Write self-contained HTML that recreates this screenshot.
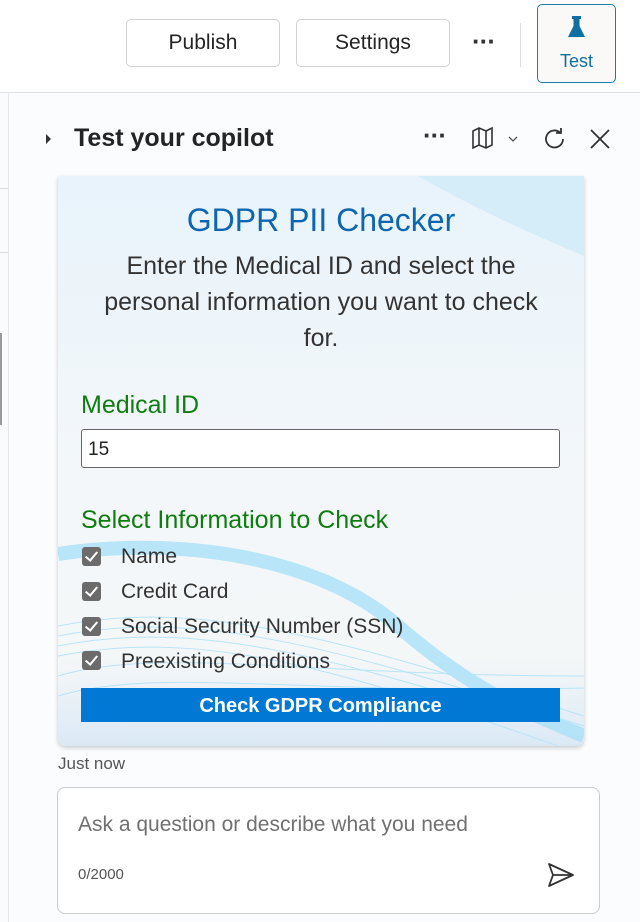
<!DOCTYPE html>
<html><head><style>
body{margin:0;width:640px;height:922px;overflow:hidden;background:#fff;font-family:"Liberation Sans",sans-serif;position:relative}
.a{position:absolute}
.btn{position:absolute;top:19px;height:48px;border:1px solid #d1d1d1;border-radius:5px;background:#fff;font-size:21px;color:#242424;display:flex;align-items:center;justify-content:center;box-sizing:border-box}
.card{position:absolute;left:58px;top:176px;width:526px;height:570px;border-radius:0 0 8px 8px;box-shadow:0 2px 5px rgba(0,0,0,.2);overflow:hidden;background:linear-gradient(180deg,#e8f3fb 0%,#f3f7fa 50%,#f4f7f8 85%,#dbe9f5 100%)}
.cb{position:absolute;left:24px;width:19px;height:19px;background:#6b6b6b;border-radius:3px}
.cb::after{content:"";position:absolute;left:6px;top:2px;width:5px;height:10px;border:solid #fff;border-width:0 2.5px 2.5px 0;transform:rotate(40deg)}
.lbl{position:absolute;left:63px;font-size:21px;color:#333}
.dots{position:absolute;font-size:26px;font-weight:bold;color:#333;letter-spacing:-1px}
</style></head><body>
<div class="a" style="left:0;top:92px;width:640px;height:1px;background:#e0e0e0"></div>
<div class="btn" style="left:126px;width:154px">Publish</div>
<div class="btn" style="left:296px;width:154px">Settings</div>
<div class="dots" style="left:472px;top:26px">···</div>
<div class="a" style="left:520px;top:23px;width:1px;height:44px;background:#ddd"></div>
<div class="a" style="left:537px;top:4px;width:79px;height:79px;border:1px solid #1a7fa8;border-radius:5px;box-sizing:border-box;background:#faf9f8"></div>
<svg class="a" style="left:565px;top:15px" width="24" height="26" viewBox="0 0 24 26"><rect x="7" y="1" width="9" height="3" fill="#0f6fa0"/><path d="M8.5 4v7L3 22h17L14.5 11V4z" fill="#0f6fa0"/></svg>
<div class="a" style="left:560px;top:51px;font-size:18px;color:#0f6fa0">Test</div>
<div class="a" style="left:0;top:93px;width:8px;height:829px;border-right:1px solid #e6e6e6;background:#fafbfd"></div>
<div class="a" style="left:0;top:188px;width:8px;height:1px;background:#ddd"></div>
<div class="a" style="left:0;top:252px;width:8px;height:1px;background:#ddd"></div>
<div class="a" style="left:0;top:333px;width:2px;height:92px;background:#999"></div>
<div class="a" style="left:9px;top:93px;width:631px;height:829px;background:#fbfcfe"></div>
<div class="a" style="left:46px;top:134px;width:0;height:0;border-left:5px solid #333;border-top:5px solid transparent;border-bottom:5px solid transparent"></div>
<div class="a" style="left:74px;top:124px;font-size:25px;font-weight:bold;color:#242424">Test your copilot</div>
<div class="dots" style="left:423px;top:120px">···</div>
<svg class="a" style="left:470px;top:126px" width="52" height="26" viewBox="0 0 52 26"><path d="M3 5l6-3 7 3 6-3v17l-6 3-7-3-6 3z M9 2v17 M16 5v17" fill="none" stroke="#333" stroke-width="1.6"/><path d="M39 11l4 4 4-4" fill="none" stroke="#555" stroke-width="1.3"/></svg>
<svg class="a" style="left:542px;top:126px" width="26" height="26" viewBox="0 0 26 26"><path d="M21 13a8.5 8.5 0 1 1-3-6.5" fill="none" stroke="#333" stroke-width="1.8"/><path d="M19 2v5h-5" fill="none" stroke="#333" stroke-width="1.8"/></svg>
<svg class="a" style="left:588px;top:127px" width="24" height="24" viewBox="0 0 24 24"><path d="M3 3l18 18M21 3L3 21" stroke="#333" stroke-width="1.8"/></svg>
<div class="card">
<svg class="a" style="left:0;top:0" width="526" height="570" viewBox="0 0 526 570">
<path d="M360 0 Q430 40 526 80 V0z" fill="#cfeaf9" opacity=".8"/>
<path d="M0 378 C120 360 260 380 340 450 S480 540 526 560" fill="none" stroke="#a9e0f8" stroke-width="14" opacity=".8"/>
<g fill="none" stroke="#b8e4f8" stroke-width="1"><path d="M0 450 C150 420 300 470 526 540"/><path d="M0 460 C150 430 300 480 526 550"/><path d="M0 470 C150 440 300 490 526 560"/><path d="M0 480 C150 450 300 500 500 570"/><path d="M0 500 C100 470 250 500 526 500"/><path d="M0 520 C100 490 250 520 526 512"/></g>
</svg>
<div class="a" style="left:0;width:526px;top:26px;text-align:center;font-size:32px;color:#0f66b0">GDPR PII Checker</div>
<div class="a" style="left:0;width:526px;top:72px;text-align:center;font-size:25px;line-height:36px;color:#333;white-space:nowrap">Enter the Medical ID and select the<br>personal information you want to check<br>for.</div>
<div class="a" style="left:23px;top:215px;font-size:25px;color:#107c10">Medical ID</div>
<div class="a" style="left:23px;top:253px;width:479px;height:39px;border:1px solid #666;border-radius:3px;background:#fff;box-sizing:border-box;font-size:19px;padding:9px 6px;color:#222">15</div>
<div class="a" style="left:23px;top:330px;font-size:25px;color:#107c10">Select Information to Check</div>
<div class="cb" style="top:371px"></div><div class="lbl" style="top:369px">Name</div>
<div class="cb" style="top:406px"></div><div class="lbl" style="top:404px">Credit Card</div>
<div class="cb" style="top:441px"></div><div class="lbl" style="top:439px">Social Security Number (SSN)</div>
<div class="cb" style="top:475px"></div><div class="lbl" style="top:474px">Preexisting Conditions</div>
<div class="a" style="left:23px;top:512px;width:479px;height:34px;background:#0078d4;color:#fff;font-weight:bold;font-size:20px;text-align:center;line-height:36px">Check GDPR Compliance</div>
</div>
<div class="a" style="left:58px;top:754px;font-size:17px;color:#555">Just now</div>
<div class="a" style="left:57px;top:787px;width:543px;height:127px;border:1px solid #ccc;border-radius:8px;background:#fff;box-sizing:border-box"></div>
<div class="a" style="left:78px;top:813px;font-size:21px;color:#707070">Ask a question or describe what you need</div>
<div class="a" style="left:78px;top:866px;font-size:15px;color:#555">0/2000</div>
<svg class="a" style="left:546px;top:861px" width="30" height="28" viewBox="0 0 30 28"><path d="M3 3l24 11L3 25l4-11z M7 14h20" fill="none" stroke="#333" stroke-width="1.8" stroke-linejoin="round"/></svg>
</body></html>
